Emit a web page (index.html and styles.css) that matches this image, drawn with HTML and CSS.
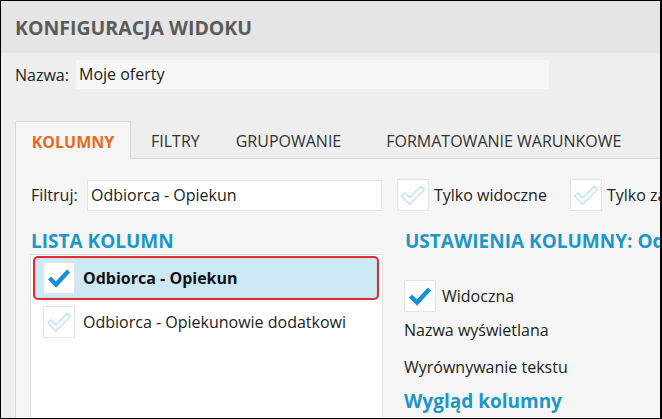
FILE: index.html
```html
<!DOCTYPE html>
<html lang="pl">
<head>
<meta charset="utf-8">
<title>Konfiguracja widoku</title>
<link rel="stylesheet" href="styles.css">
</head>
<body>
<div class="window">
  <header class="title-bar"><h1 class="title">KONFIGURACJA WIDOKU</h1></header>
  <main class="content">
    <div class="name-row">
      <label class="name-label">Nazwa:</label>
      <div class="name-input">Moje oferty</div>
    </div>
    <nav class="tabs">
      <div class="tab tab-active">KOLUMNY</div>
      <div class="tab tab-filters">FILTRY</div>
      <div class="tab tab-group">GRUPOWANIE</div>
      <div class="tab tab-format">FORMATOWANIE WARUNKOWE</div>
    </nav>
    <section class="panel">
      <div class="filter-row">
        <label class="filter-label">Filtruj:</label>
        <div class="filter-input">Odbiorca - Opiekun</div>
        <div class="check-item first-check">
          <span class="checkbox"><svg class="check-outline" viewBox="0 0 24 24"><polygon points="1.5,13 4.5,10 9,14.5 19.5,4 22.5,7 9,20.5"/></svg></span>
          <span class="check-text">Tylko widoczne</span>
        </div>
        <div class="check-item second-check">
          <span class="checkbox"><svg class="check-outline" viewBox="0 0 24 24"><polygon points="1.5,13 4.5,10 9,14.5 19.5,4 22.5,7 9,20.5"/></svg></span>
          <span class="check-text">Tylko zaznaczone</span>
        </div>
      </div>
      <div class="columns">
        <div class="col-left">
          <h2 class="section-title">LISTA KOLUMN</h2>
          <div class="list">
            <div class="list-item selected">
              <span class="checkbox"><svg class="check-solid" viewBox="0 0 24 24"><polyline points="2.5,12 9,18.5 21.5,5"/></svg></span>
              <span class="item-text bold">Odbiorca - Opiekun</span>
            </div>
            <div class="list-item">
              <span class="checkbox"><svg class="check-outline" viewBox="0 0 24 24"><polygon points="1.5,13 4.5,10 9,14.5 19.5,4 22.5,7 9,20.5"/></svg></span>
              <span class="item-text">Odbiorca - Opiekunowie dodatkowi</span>
            </div>
          </div>
        </div>
        <div class="col-right">
          <h2 class="section-title nowrap">USTAWIENIA KOLUMNY: Odbiorca - Opiekun</h2>
          <div class="visible-row">
            <span class="checkbox"><svg class="check-solid" viewBox="0 0 24 24"><polyline points="2.5,12 9,18.5 21.5,5"/></svg></span>
            <span class="check-text">Widoczna</span>
          </div>
          <div class="field-label">Nazwa wyświetlana</div>
          <div class="field-label second">Wyrównywanie tekstu</div>
          <h3 class="sub-title">Wygląd kolumny</h3>
        </div>
      </div>
    </section>
  </main>
</div>
</body>
</html>
```
FILE: styles.css
```css
* { box-sizing: border-box; }
html, body { margin: 0; padding: 0; }
body {
  width: 662px;
  height: 419px;
  overflow: hidden;
  background: #fff;
  font-family: "Open Sans", "Noto Sans", sans-serif;
  font-size: 16px;
  color: #222;
}
.window {
  width: 662px;
  height: 419px;
  border: 1px solid #000;
  border-right-width: 2px;
  background: #eeeeee;
  overflow: hidden;
  display: flex;
  flex-direction: column;
}
.title-bar {
  height: 52px;
  flex: none;
  background: #e5e5e5;
  padding-left: 14px;
  display: flex;
  align-items: center;
}
.title {
  margin: 0;
  font-size: 19.5px;
  font-weight: 700;
  color: #5b5b5b;
  white-space: nowrap;
}
.content {
  flex: 1;
  padding: 7px 0 0 14px;
  display: flex;
  flex-direction: column;
  min-height: 0;
}
.name-row {
  display: flex;
  align-items: center;
  height: 29px;
  flex: none;
}
.name-label { width: 61px; flex: none; }
.name-input {
  flex: none;
  width: 473px;
  height: 29px;
  background: #f7f7f7;
  padding-left: 3px;
  line-height: 29px;
}
.tabs {
  margin-top: 32px;
  display: flex;
  height: 37px;
  flex: none;
  align-items: stretch;
  white-space: nowrap;
}
.tab {
  flex: none;
  display: flex;
  align-items: center;
  color: #333;
  padding-top: 2px;
}
.tab-active {
  width: 116px;
  justify-content: center;
  background: #f5f5f5;
  border: 1px solid #d8d8d8;
  border-bottom: none;
  color: #e8691e;
  font-weight: 700;
  margin-bottom: -1px;
  position: relative;
  z-index: 1;
}
.tab-filters { margin-left: 20px; }
.tab-group { margin-left: 36px; }
.tab-format { margin-left: 45px; }
.panel {
  flex: 1;
  background: #f5f5f5;
  border-top: 1px solid #d8d8d8;
  border-left: 1px solid #d8d8d8;
  padding: 20px 0 0 15px;
  min-height: 0;
}
.filter-row {
  display: flex;
  align-items: center;
  height: 32px;
  white-space: nowrap;
}
.filter-row > * { flex: none; }
.filter-label { width: 56px; }
.filter-input {
  width: 295px;
  height: 31px;
  background: #fff;
  border: 1px solid #e4e4e4;
  padding-left: 3px;
  line-height: 29px;
}
.check-item {
  display: flex;
  align-items: center;
  gap: 5px;
}
.first-check { margin-left: 15px; }
.second-check { margin-left: 23px; }
.checkbox {
  width: 32px;
  height: 32px;
  flex: none;
  background: #fff;
  border: 1px solid #e4e4e4;
  display: flex;
  align-items: center;
  justify-content: center;
}
.check-outline {
  width: 26px;
  height: 26px;
}
.check-outline polygon {
  fill: none;
  stroke: #b3def1;
  stroke-width: 1.1;
  stroke-linejoin: miter;
}
.check-solid {
  width: 24px;
  height: 24px;
}
.check-solid polyline {
  fill: none;
  stroke: #1690d8;
  stroke-width: 4.4;
  stroke-linecap: butt;
  stroke-linejoin: miter;
}
.columns {
  display: flex;
  margin-top: 18px;
  margin-left: -1px;
}
.col-left {
  width: 353px;
  flex: none;
}
.section-title {
  margin: 0;
  padding-left: 1px;
  font-size: 19px;
  line-height: 24px;
  font-weight: 700;
  color: #1d97c6;
}
.nowrap { white-space: nowrap; }
.list {
  margin-top: 1px;
  height: 200px;
  background: #fff;
  border: 1px solid #dedede;
  padding: 1px 3px 0 2px;
}
.list-item {
  height: 44px;
  display: flex;
  align-items: center;
  padding-left: 8px;
  gap: 8px;
  border: 2px solid transparent;
  border-radius: 5px;
  white-space: nowrap;
}
.list-item.selected {
  background: #cde9f6;
  border-color: #e62a2f;
  box-shadow: inset 0 0 2px rgba(0,0,0,0.12);
}
.item-text.bold { font-weight: 700; color: #111; }
.col-right {
  margin-left: 21px;
  flex: none;
}
.visible-row {
  margin-top: 27px;
  display: flex;
  align-items: center;
  gap: 6px;
}
.field-label {
  margin-top: 6px;
  line-height: 24px;
}
.field-label.second { margin-top: 13px; }
.sub-title {
  margin: 10px 0 0;
  font-size: 19px;
  font-weight: 700;
  color: #1d97c6;
  line-height: 24px;
}
```
